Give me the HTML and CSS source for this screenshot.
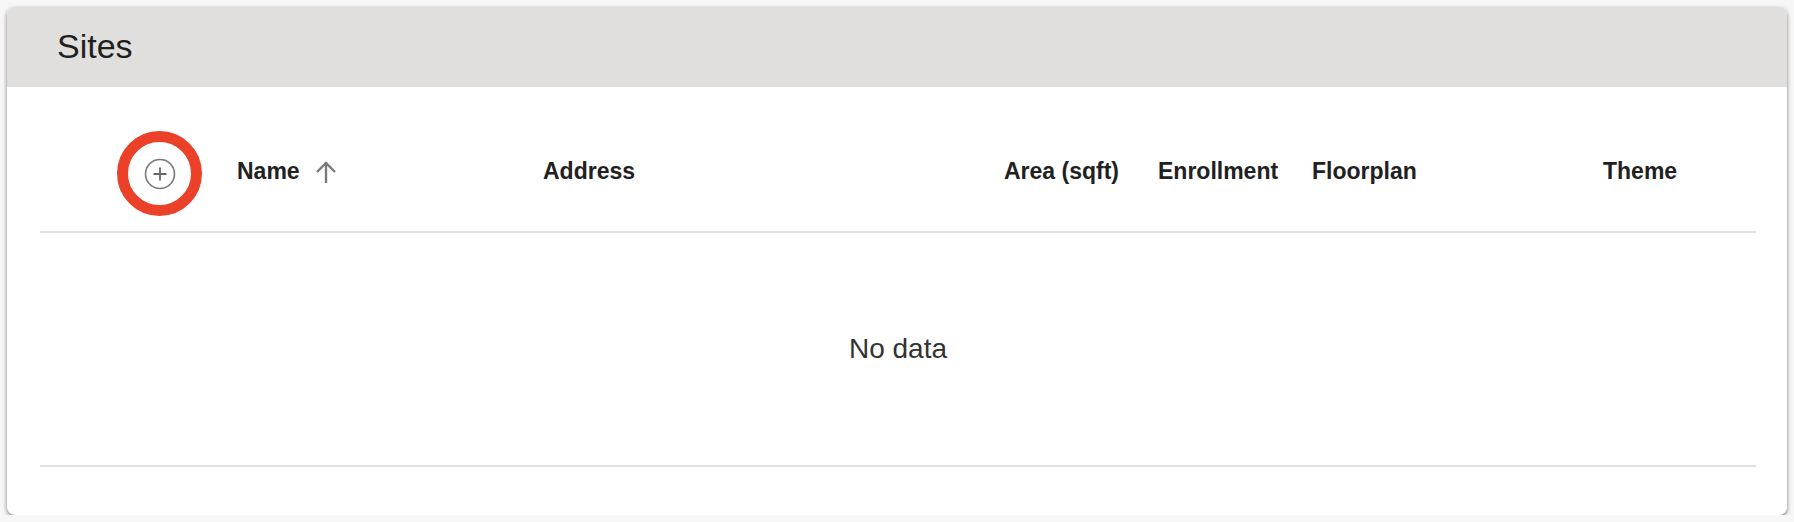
FILE: index.html
```html
<!DOCTYPE html>
<html lang="en">
<head>
    <meta charset="UTF-8">
    <title>Sites</title>
    <link rel="stylesheet" href="styles.css">
</head>
<body>
    <div class="card">
        <div class="card-head">
            <h1 class="title">Sites</h1>
        </div>
        <div class="card-body">
            <div class="table-head">
                <div class="cell add-cell">
                    <button class="add-btn" title="Add site">
                        <svg width="32" height="32" viewBox="0 0 32 32">
                            <circle cx="16" cy="16" r="14.5" fill="none" stroke="#777" stroke-width="1.6"/>
                            <path d="M16 9.5v13M9.5 16h13" stroke="#666" stroke-width="1.8" fill="none"/>
                        </svg>
                    </button>
                </div>
                <div class="cell">Name
                    <svg class="sort" width="24" height="22" viewBox="0 0 24 22">
                        <path d="M12 2v20M3 11l9-9 9 9" stroke="#7a7a7a" stroke-width="2.4" fill="none"/>
                    </svg>
                </div>
                <div class="cell">Address</div>
                <div class="cell">Area (sqft)</div>
                <div class="cell">Enrollment</div>
                <div class="cell">Floorplan</div>
                <div class="cell">Theme</div>
            </div>
            <div class="empty">No data</div>
        </div>
    </div>
</body>
</html>
```

FILE: styles.css
```css
body {
    margin: 0;
    padding: 7px 7px 0 7px;
    background: #f7f7f7;
    font-family: "Liberation Sans", Arial, sans-serif;
    color: #212121;
}

.card {
    background: #fff;
    border-radius: 8px;
    box-shadow: 0 2px 4px rgba(0, 0, 0, 0.5);
    height: 508px;
    overflow: hidden;
}

.card-head {
    background: #e0dfdd;
    height: 80px;
    padding-left: 50px;
    box-sizing: border-box;
}

.title {
    margin: 0;
    font-size: 34px;
    font-weight: normal;
    line-height: 78px;
    color: #1f1f1f;
}

.card-body {
    padding: 24px 31px 0 33px;
}

.table-head {
    display: grid;
    grid-template-columns: 197px 306px 461px 154px 154px 291px 153px;
    align-items: center;
    height: 120px;
    border-bottom: 2px solid #e0e0e0;
    font-size: 23px;
    font-weight: bold;
}

.cell {
    display: flex;
    align-items: center;
    white-space: nowrap;
}

.add-cell {
    padding-left: 77px;
}

.add-btn {
    width: 85px;
    height: 85px;
    border-radius: 50%;
    border: 11px solid #ea4128;
    background: #fff;
    padding: 0;
    display: flex;
    align-items: center;
    justify-content: center;
    margin-top: 5px;
}

.sort {
    margin-left: 14px;
    margin-top: 2px;
}

.empty {
    height: 232px;
    display: flex;
    align-items: center;
    justify-content: center;
    border-bottom: 2px solid #e0e0e0;
    font-size: 28px;
    color: #333;
}
```
